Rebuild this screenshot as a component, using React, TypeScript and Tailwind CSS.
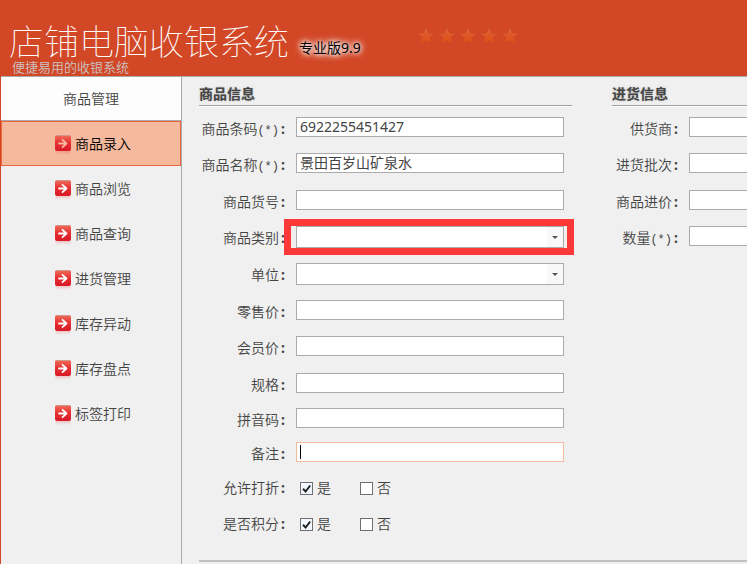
import { useId, type ReactNode } from "react";

const menuItems = [
  "商品录入",
  "商品浏览",
  "商品查询",
  "进货管理",
  "库存异动",
  "库存盘点",
  "标签打印",
];

const ArrowIcon = () => {
  const id = useId();

  return (
    <svg width="16" height="20" viewBox="0 0 16 20" aria-hidden="true">
      <defs>
        <linearGradient id={id} x1="0" y1="0" x2="0" y2="1">
          <stop offset="0" stopColor="#f0705c" />
          <stop offset="0.5" stopColor="#e62e30" />
          <stop offset="1" stopColor="#d81a28" />
        </linearGradient>
        <linearGradient id={`${id}-glow`} x1="0" y1="0" x2="0" y2="1">
          <stop offset="0" stopColor="#e62e30" stopOpacity="0.22" />
          <stop offset="1" stopColor="#e62e30" stopOpacity="0" />
        </linearGradient>
      </defs>
      <rect x="0.5" y="16" width="15" height="4" fill={`url(#${id}-glow)`} />
      <rect width="16" height="16" rx="2" fill={`url(#${id})`} />
      <path d="M1.5 .5h13" stroke="#c9a096" strokeOpacity="0.8" />
      <path
        d="M4 8.5h7.5M7.5 4.8l4 3.7-4 3.7"
        fill="none"
        stroke="currentColor"
        strokeWidth="1.8"
        strokeLinecap="round"
        strokeLinejoin="round"
      />
    </svg>
  );
};

const StarIcon = () => {
  const id = useId();

  return (
    <svg width="18" height="18" viewBox="0 0 18 18" aria-hidden="true">
      <linearGradient id={id} x1="0" y1="0" x2="0" y2="1">
        <stop offset="0" stopColor="#e0643a" />
        <stop offset="1" stopColor="#dd4d14" />
      </linearGradient>
      <path
        d="M9 .3l2.5 5.7 6.1.6-4.6 4 1.4 6.2L9 13.9l-5.4 2.9L5 10.6.4 6.6l6.1-.6z"
        fill={`url(#${id})`}
        stroke="#cb4c2a"
        strokeWidth="0.6"
      />
    </svg>
  );
};

type LabelTextProps = {
  label: string;
  required?: boolean;
};

const LabelText = ({ label, required }: LabelTextProps) => (
  <>
    {label}
    {required && (
      <span className="font-['Liberation_Mono',monospace] text-xs">(*)</span>
    )}
    <span className="inline-block w-2 text-center font-bold">:</span>
  </>
);

type FieldProps = LabelTextProps & {
  id: string;
  narrow?: boolean;
};

const Field = ({
  id,
  label,
  required,
  narrow,
  children,
}: FieldProps & { children: ReactNode }) => (
  <div className="flex items-start gap-[9px]">
    <label
      htmlFor={id}
      className={
        narrow
          ? "w-[68px] shrink-0 whitespace-nowrap text-right leading-6"
          : "w-[88px] shrink-0 whitespace-nowrap text-right leading-6"
      }
    >
      <LabelText label={label} required={required} />
    </label>
    {children}
  </div>
);

const TextField = ({
  value,
  active,
  ...field
}: FieldProps & { value?: string; active?: boolean }) => (
  <Field {...field}>
    <div className="relative flex min-w-0 flex-1">
      <input
        id={field.id}
        type="text"
        defaultValue={value}
        className={
          active
            ? "h-5 w-full border border-[#f5ba9d] bg-white px-[3px] font-normal outline-none"
            : "h-5 w-full border border-[#ababab] bg-white px-[3px] font-normal outline-none"
        }
      />
      {active && (
        <span className="pointer-events-none absolute inset-y-[3px] left-1 w-px bg-black" />
      )}
    </div>
  </Field>
);

const SelectField = ({ marked, ...field }: FieldProps & { marked?: boolean }) => (
  <Field {...field}>
    <div className="relative flex min-w-0 flex-1">
      <select
        id={field.id}
        className="h-[22px] w-full appearance-none border border-[#ababab] bg-white px-[3px] outline-none"
      />
      <span className="pointer-events-none absolute inset-y-px right-px flex w-4 items-center justify-center bg-[#f8f8f8]">
        <svg width="6" height="3" viewBox="0 0 6 3" aria-hidden="true">
          <path d="M0 0h6L3 3z" fill="#555" />
        </svg>
      </span>
      {marked && (
        <span className="pointer-events-none absolute -bottom-[7px] -left-3 -right-[10px] -top-[7px] border-7 border-[#fd3838]" />
      )}
    </div>
  </Field>
);

const CheckField = ({ id, label }: FieldProps) => (
  <div role="group" aria-labelledby={id} className="flex items-start gap-[13px]">
    <span id={id} className="w-[88px] shrink-0 text-right leading-6">
      <LabelText label={label} />
    </span>
    <div className="flex gap-3">
      {["是", "否"].map((option) => (
        <label key={option} className="flex h-6 w-12 items-center gap-1">
          <span className="relative flex">
            <input
              type="checkbox"
              defaultChecked={option === "是"}
              className="peer size-[13px] appearance-none border border-[#707070] bg-white checked:bg-[#f2f7ff]"
            />
            <svg
              viewBox="0 0 13 13"
              className="pointer-events-none absolute inset-0 hidden size-[13px] peer-checked:block"
              aria-hidden="true"
            >
              <path
                d="M3 6.8l2.6 2.7 4.6-6"
                fill="none"
                stroke="#222"
                strokeWidth="2"
              />
            </svg>
          </span>
          {option}
        </label>
      ))}
    </div>
  </div>
);

const SectionTitle = ({ children }: { children: string }) => (
  <h2 className="mb-[11px] border-b border-[#a0a0a0] font-bold leading-[22px] text-[#444] shadow-[0_1px_0_#fff] [text-shadow:0_0_2px_#aaa]">
    {children}
  </h2>
);

const App = () => (
  <div className="flex min-h-screen flex-col overflow-x-hidden border-l border-[#d24726] bg-[#f0f0f0] font-['Noto_Sans','Noto_Sans_CJK_SC',sans-serif] text-sm font-[350] text-[#444]">
    <header className="flex h-[77px] items-start border-b border-[#ababab] bg-[#d24726]">
      <div className="pl-2 pt-5">
        <div className="flex items-end gap-[10px]">
          <h1 className="whitespace-nowrap font-['Noto_Sans_CJK_SC',sans-serif] text-[35px] font-thin leading-10 text-white">
            店铺电脑收银系统
          </h1>
          <span className="whitespace-nowrap font-normal leading-6 text-black [text-shadow:0_0_4px_#fff,0_0_6px_#fff,0_0_10px_#fff]">
            专业版9.9
          </span>
        </div>
        <p className="pl-[3px] text-[13px] leading-[14px] text-[#c9c4c4]">
          便捷易用的收银系统
        </p>
      </div>
      <div className="flex gap-[3px] pl-14 pt-[27px]">
        {[1, 2, 3, 4, 5].map((star) => (
          <StarIcon key={star} />
        ))}
      </div>
    </header>

    <div className="flex flex-1">
      <nav className="w-[181px] shrink-0 border-r border-[#ababab]">
        <h2 className="h-11 border-b border-[#ababab] bg-[#fdfdfd] text-center leading-[44px]">
          商品管理
        </h2>
        <ul>
          {menuItems.map((item, index) => (
            <li key={item}>
              <a
                href="#"
                className={
                  index === 0
                    ? "flex h-[45px] items-center border border-[#f0663c] bg-[#f5ba9d] pl-[53px] text-black"
                    : "flex h-[45px] items-center pl-[54px]"
                }
              >
                <span
                  className={
                    index === 0 ? "pt-[2px] text-[#f5ba9d]" : "pt-[2px] text-white"
                  }
                >
                  <ArrowIcon />
                </span>
                <span className="pl-1">{item}</span>
              </a>
            </li>
          ))}
        </ul>
      </nav>

      <main className="min-w-0 flex-1 pl-[17px] pt-[6px]">
        <div className="flex gap-10">
          <section className="w-[373px] shrink-0">
            <SectionTitle>商品信息</SectionTitle>
            <div className="grid grid-rows-[36px_37px_36px_37px_37px_36px_37px_35px_34px_34px_36px_48px] pr-2">
              <TextField id="barcode" label="商品条码" required value="6922255451427" />
              <TextField id="name" label="商品名称" required value="景田百岁山矿泉水" />
              <TextField id="number" label="商品货号" />
              <SelectField id="category" label="商品类别" marked />
              <SelectField id="unit" label="单位" />
              <TextField id="retail" label="零售价" />
              <TextField id="member" label="会员价" />
              <TextField id="spec" label="规格" />
              <TextField id="pinyin" label="拼音码" />
              <TextField id="remark" label="备注" active />
              <CheckField id="discount" label="允许打折" />
              <CheckField id="points" label="是否积分" />
            </div>
          </section>

          <section className="min-w-0 flex-1">
            <SectionTitle>进货信息</SectionTitle>
            <div className="-mr-1 grid grid-rows-[36px_37px_36px_37px]">
              <TextField id="supplier" label="供货商" narrow />
              <TextField id="batch" label="进货批次" narrow />
              <TextField id="cost" label="商品进价" narrow />
              <TextField id="quantity" label="数量" required narrow />
            </div>
          </section>
        </div>
        <div className="border-t-2 border-[#c0c0c0]" />
      </main>
    </div>
  </div>
);

export default App;
